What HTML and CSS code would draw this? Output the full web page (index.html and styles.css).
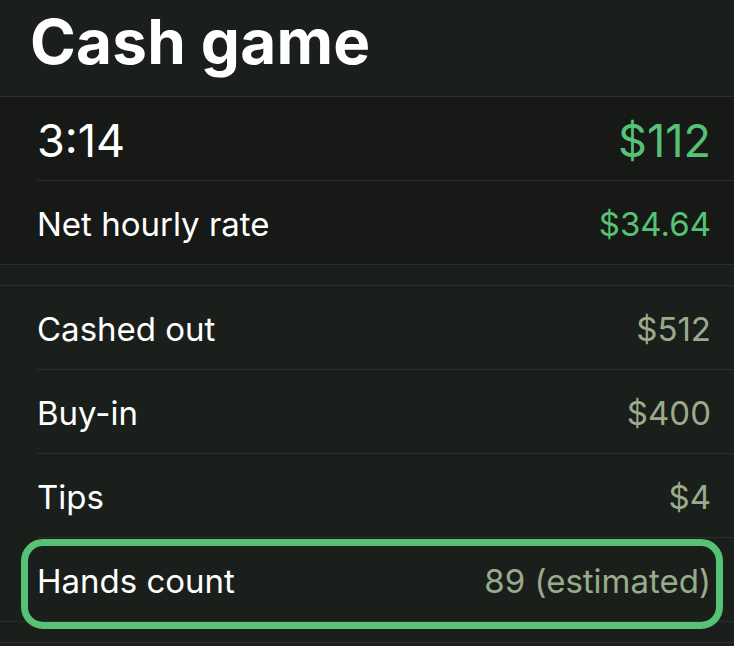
FILE: index.html
```html
<!DOCTYPE html>
<html>
<head>
<meta charset="utf-8">
<link rel="stylesheet" href="styles.css">
</head>
<body>
<header class="header"><h1 class="title">Cash game</h1></header>
<section class="group group-primary">
  <div class="row row-big"><span class="label">3:14</span><span class="value value-green">$112</span></div>
  <div class="row row-last"><span class="label">Net hourly rate</span><span class="value value-green">$34.64</span></div>
</section>
<div class="gap"></div>
<section class="group">
  <div class="row"><span class="label">Cashed out</span><span class="value">$512</span></div>
  <div class="row"><span class="label">Buy-in</span><span class="value">$400</span></div>
  <div class="row"><span class="label">Tips</span><span class="value">$4</span></div>
  <div class="row row-last row-highlight"><span class="label">Hands count</span><span class="value">89 (estimated)</span><span class="highlight"></span></div>
</section>
<div class="gap"></div>
</body>
</html>
```
FILE: styles.css
```css
html, body {
  margin: 0;
  padding: 0;
  background: #1b1f1c;
  font-family: Inter, "Noto Sans", sans-serif;
  color: #ffffff;
  overflow: hidden;
}
.header {
  height: 96px;
  border-bottom: 1px solid #2b302c;
  display: flex;
  align-items: center;
  padding-left: 30px;
}
.title {
  margin: 0;
  font-size: 62px;
  font-weight: 700;
  letter-spacing: 0.2px;
  line-height: 1;
  position: relative;
  top: -6px;
}
.group {
  background: #1b1f1c;
  border-bottom: 1px solid #2b302c;
}
.group-primary {
  background: #171917;
}
.gap {
  height: 20px;
  border-bottom: 1px solid #2b302c;
}
.row {
  height: 80px;
  padding-top: 3px;
  margin-left: 37px;
  padding-right: 23px;
  border-bottom: 1px solid #2b302c;
  display: flex;
  align-items: center;
  justify-content: space-between;
  font-size: 33px;
  position: relative;
}
.row-last {
  border-bottom: none;
}
.row-big {
  font-size: 45px;
}
.label {
  color: #ffffff;
}
.value {
  color: #9aab8c;
}
.value-green {
  color: #55c275;
}
.highlight {
  position: absolute;
  left: -16px;
  right: 11px;
  top: 1px;
  height: 76px;
  border: 7px solid #55c275;
  border-radius: 22px;
}
```
